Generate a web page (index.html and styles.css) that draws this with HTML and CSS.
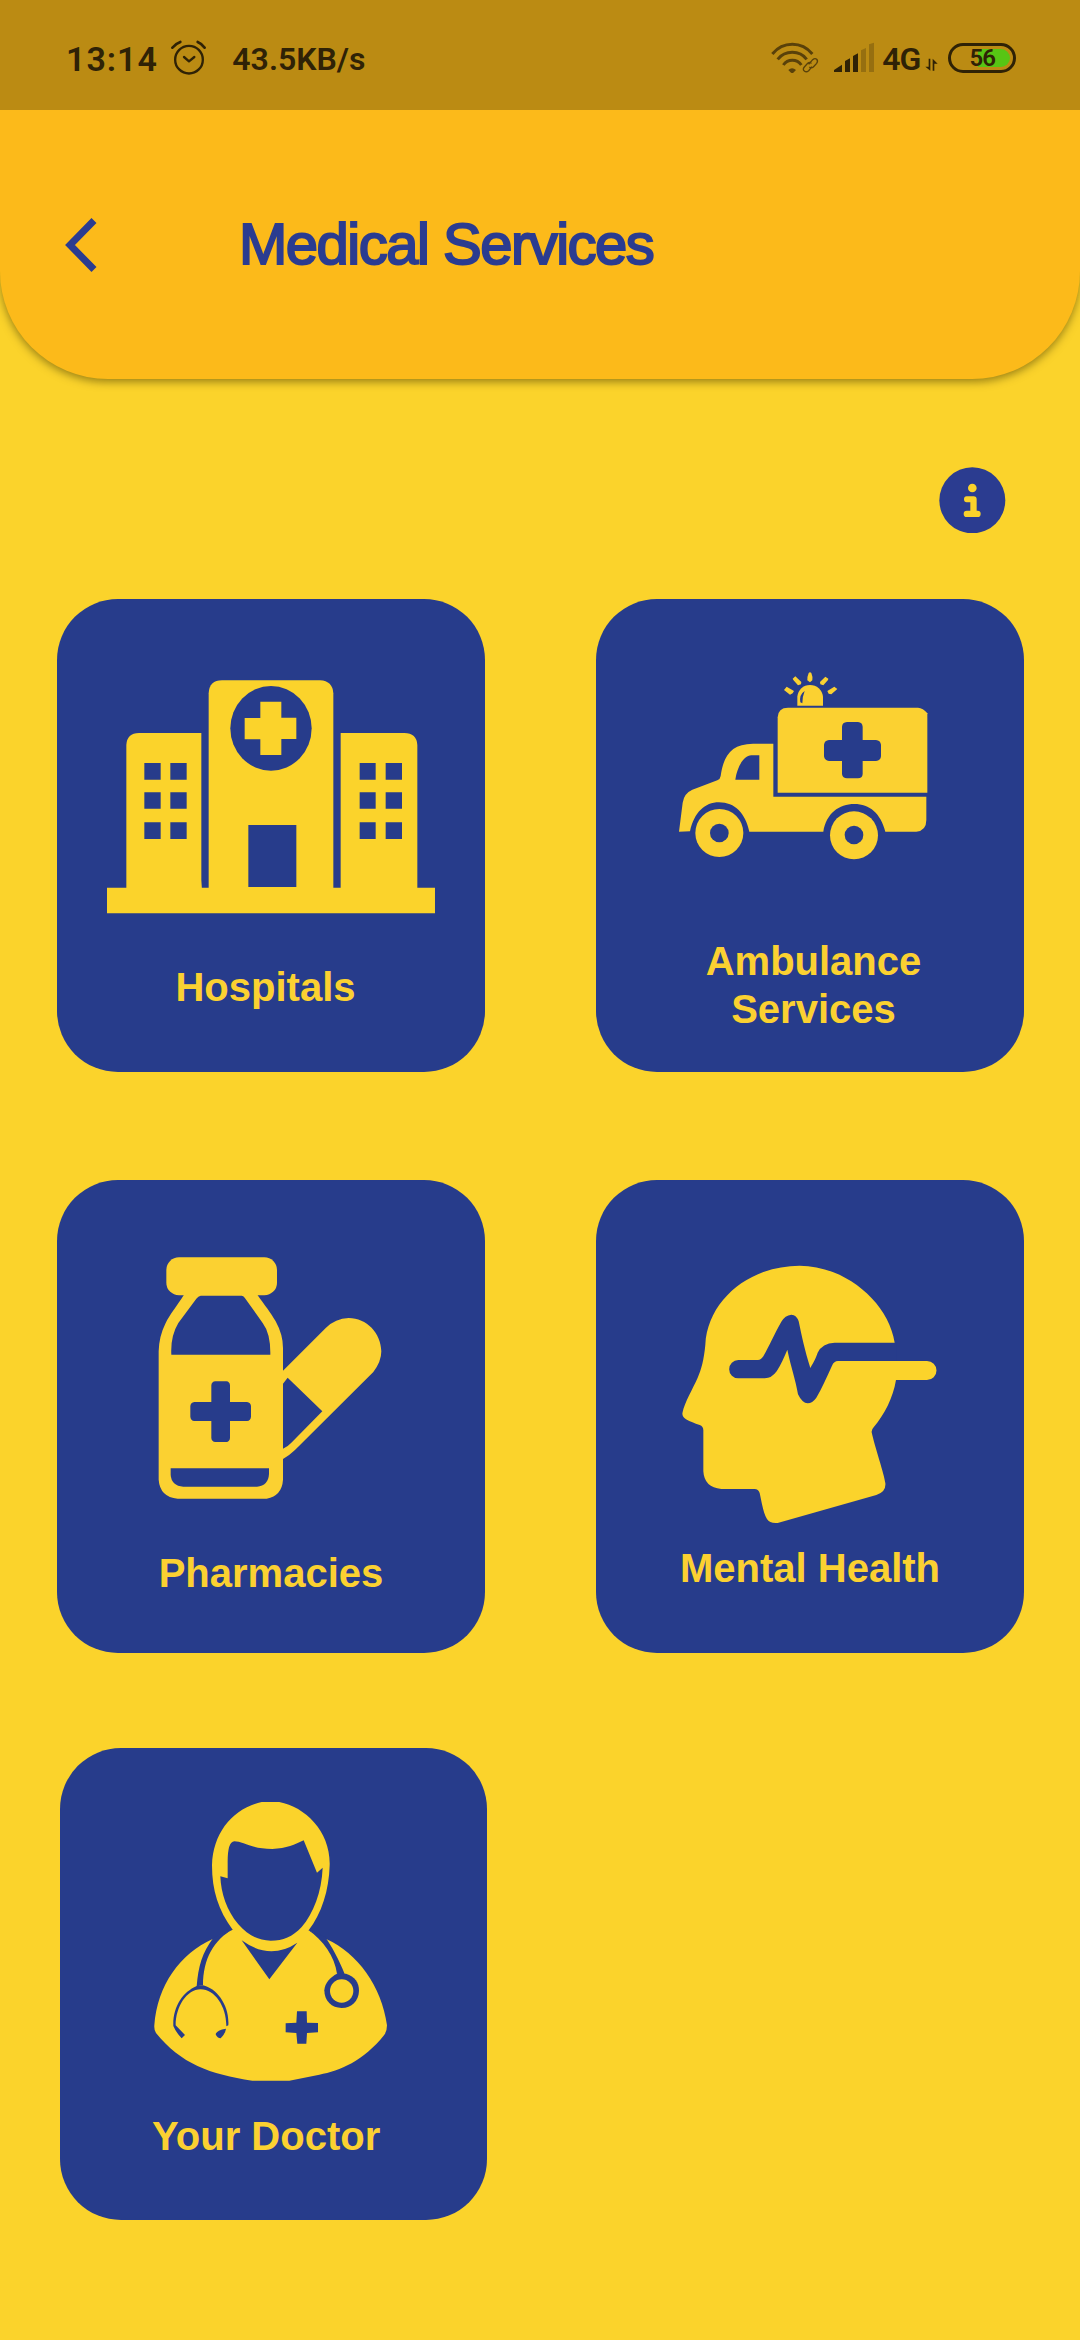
FILE: index.html
```html
<!DOCTYPE html>
<html lang="en">
<head>
<meta charset="utf-8">
<title>Medical Services</title>
<link rel="stylesheet" href="styles.css">
</head>
<body>
<header class="header">
  <div class="status">
    <span class="clock">13:14</span>
    <svg class="alarm" viewBox="345 28 112 112" fill="none" stroke="#2f2206" stroke-linecap="round">
      <circle cx="402" cy="90" r="41.500" stroke-width="7"/>
      <path d="M387 82l15 13 16-13" stroke-width="7" stroke-linejoin="round"/>
      <path d="M352 54q8-11 24-17M428 37q14 6 21 17" stroke-width="8"/>
    </svg>
    <span class="speed">43.5KB/s</span>
    <svg class="signals" viewBox="30 33 318 102">
      <g fill="none" stroke="#59410a">
        <path d="M37 72Q61 43 97 43t60 29" stroke-width="9"/>
        <path d="M53 88Q70 67 97 67t43 21" stroke-width="9"/>
        <path d="M70 105Q80 91 97 91t27 14" stroke-width="9"/>
        <path d="M146 103l12-14q7-6 12-1t0 12l-10 11q-6 5-12 0M156 110l-10 12q-7 6-13 1t0-12l10-11q6-5 12 0" stroke-width="4"/>
      </g>
      <path d="M85 120q11-11 23 0l-8 8q-3 2-7 0z" fill="#59410a"/>
      <path d="M222 126v-6l24-16v22zM255 126V93l15-8v41zM279 126V78l15-8v56z" fill="#2f2206"/>
      <path d="M303 126V61l15-7v72zM327 126V43l15-5v88z" fill="#966f10"/>
    </svg>
    <span class="network">4G</span>
    <svg class="data" viewBox="496 85 40 42" fill="#2f2206"><path d="M507 87h5v36L497 111h10zM519 123h5v-21h10L519 87z"/></svg>
    <span class="battery"><span class="level">56</span></span>
  </div>
  <div class="titlebar">
    <svg class="back" viewBox="0 0 32 54" fill="none" stroke="#2b3c90" stroke-width="7"><path d="M29 2.500L5 27l24 24.500"/></svg>
    <h1>Medical Services</h1>
  </div>
</header>

<main>
  <svg class="info" viewBox="0 0 200 200">
    <circle cx="100" cy="100" r="99" fill="#2b3c90"/>
    <g fill="#fbd32b"><circle cx="100" cy="63" r="13"/><path d="M83 88h21q9 0 9 9v34h3q9 0 9 9 0 10-9 10H83q-9 0-9-10 0-9 9-9h11v-25H83q-8 0-8-9t8-9z"/></g>
  </svg>

  <div class="grid">
    <section class="card hospitals">
      <svg class="art h-hosp" viewBox="53 57 1282 1092">
        <g fill="#fbd32b">
          <path d="M203 923H1187V1000H203z"/>
          <path d="M261 930V495Q263 459 299 459H486V900L488 930zM904 930V459H1095Q1132 459 1134 495V930z"/>
          <path d="M508 930V340Q510 301 548 301H842Q880 303 882 340V930z"/>
        </g>
        <g fill="#273c8b">
          <ellipse cx="695" cy="445" rx="122" ry="127"/>
          <path d="M627 735H771V921H627z"/>
          <path d="M315 549h49v50h-49zM393 549h49v50h-49zM315 637h49v49h-49zM393 637h49v49h-49zM315 727h49v50h-49zM393 727h49v50h-49z"/>
          <path d="M961 549h48v50h-48zM1039 549h49v50h-49zM961 637h48v49h-48zM1039 637h49v49h-49zM961 727h48v50h-48zM1039 727h49v50h-49z"/>
        </g>
        <path d="M663 365h63v48h45v64h-45v48h-63v-47h-47v-64h47z" fill="#fbd32b"/>
      </svg>
      <h2>Hospitals</h2>
    </section>

    <section class="card ambulance">
      <svg class="art h-amb" viewBox="49 57 1282 1014">
        <g fill="#fbd131">
          <path d="M298 755L309 668Q313 640 338 629L413 601Q422 597 423 588C432 525 455 492 520 491H581V650H1040V720Q1040 752 1010 755H917C903 700 870 672 824 672S740 700 731 755H509C497 700 466 667 418 667C375 667 344 697 331 754z"/>
          <path d="M594 638V412Q595 383 625 383H1015Q1030 384 1043 400V638z"/>
          <path d="M653 377V350C655 329 671 315 691 315S728 329 730 350V377z"/>
          <path d="M687 279Q691 275 695 279Q700 291 698 301L691 307 683 301Q682 291 687 279z"/>
          <path d="M639 296l8-7 18 17-1 7-9 3-14-16zM746 296l-9-6-16 16 1 7 9 3 14-16zM613 330l8-10 22 13-4 7-8 4zM773 327l-9-7-21 13 4 8 8 2z"/>
          <circle cx="419" cy="759" r="72"/><circle cx="823" cy="766" r="72"/>
        </g>
        <g fill="#273c8b">
          <circle cx="419" cy="759" r="28"/><circle cx="823" cy="765" r="28"/>
          <path d="M467 599C472 563 491 526 515 526H539V599z"/>
          <path d="M675 333Q668 350 668 370L662 367Q658 344 675 333z"/>
          <path d="M787 440Q788 427 802 426H835Q848 427 849 440V480H889Q902 481 904 494V529Q903 542 889 543H849V582Q848 595 835 595H802Q789 595 787 582V543H748Q735 542 733 529V494Q735 481 748 480H787z"/>
        </g>
      </svg>
      <h2>Ambulance<br>Services</h2>
    </section>

    <section class="card pharmacies">
      <svg class="art h-pharm" viewBox="51 61 1282 1107">
        <g fill="#fbd131">
          <rect x="379" y="293" width="332" height="114" rx="38"/>
          <path d="M432 405C410 440 390 462 376 492Q357 530 356 575V960Q360 1012 413 1017H680Q726 1008 729 960V898Q747 888 765 871L1000 637Q1024 606 1024 575C1023 520 980 475 926 475Q886 477 858 504L729 633V565Q729 525 707 485C692 458 675 438 652 405z"/>
        </g>
        <g fill="#273c8b">
          <path d="M482 408H605Q610 408 614 414L668 490Q692 522 691 585H394Q391 530 415 490L469 417Q475 409 482 408z"/>
          <path d="M392 926H687V943Q685 978 651 981H430Q394 978 392 945z"/>
          <path d="M514 677Q515 666 526 665H559Q569 666 570 677V727H621Q632 728 633 739V771Q632 783 621 784H570V835Q569 846 559 847H526Q515 846 514 835V784H463Q452 783 451 771V739Q452 728 463 727H514z"/>
          <path d="M729 672L743 654 847 755 754 849Q742 862 729 867z"/>
        </g>
      </svg>
      <h2>Pharmacies</h2>
    </section>

    <section class="card mental">
      <svg class="art h-mental" viewBox="49 61 1282 1092">
        <path d="M945 549C926 426 795 318 660 318C512 318 384 420 377 555C373 598 365 630 354 654C340 686 314 730 309 757Q305 770 319 779C332 786 344 791 360 796Q371 800 371 812V935Q374 984 425 988H525Q536 988 540 1000C547 1032 551 1060 562 1078Q570 1092 594 1090L890 1006Q920 997 917 970C914 945 885 860 876 818Q875 810 882 803C915 763 940 715 949 661H1042A28.500 28.500 0 0 0 1042 604H945z" fill="#fbd32b"/>
        <path d="M476 601H535Q544 601 551 590C570 556 583 525 605 486Q616 467 635 465Q651 466 657 485C667 533 675 570 692 625C704 604 709 594 714 579Q728 550 765 549H950V604H775Q763 604 757 618C740 655 726 687 710 714Q698 731 684 731Q668 731 655 704C648 660 633 620 623 570C613 594 604 615 591 635Q576 656 555 656H476A27.500 27.500 0 0 1 476 601z" fill="#273c8b"/>
      </svg>
      <h2>Mental Health</h2>
    </section>

    <section class="card doctor">
      <svg class="art h-doc" viewBox="60 53 1282 1092">
        <path d="M665 215H718C797 230 872 305 869 405C867 480 845 550 806 600L860 627C952 668 1025 768 1041 885Q1041 903 1032 915C970 992 900 1022 838 1033L748 1051H637C510 1032 422 1000 348 908Q342 900 343 885C352 765 420 670 518 626L578 598C535 540 516 480 516 405C519 305 580 235 665 215z" fill="#fbd32b"/>
        <g fill="#273c8b">
          <path d="M541 438L563 444V400Q562 334 583 333C608 333 635 356 697 356C740 355 765 342 791 330L831 427 848 412C845 485 820 550 785 590C757 620 730 631 692 631C652 630 622 613 595 582C560 540 543 490 541 438z"/>
          <path d="M605 630Q690 692 772 637L688 747z"/>
          <path d="M580 596C522 628 489 685 489 765L470 768C475 708 486 668 520 622z"/>
          <path d="M804 598C850 630 884 678 891 730L918 740C905 708 888 668 856 620z"/>
          <path d="M470 767C428 785 398 830 400 887Q408 906 425 924L435 914 407 885C407 830 440 777 482 777C525 777 560 830 559 888L565 885C569 825 530 774 489 765z"/>
          <path d="M558 895Q530 899 527 912Q532 924 542 924Q555 912 558 895z"/>
          <path d="M891 730H918C945 740 957 755 957 781C956 812 935 833 905 833S853 812 853 780C854 757 872 740 891 730z"/>
          <path d="M771 843H800L801 877 834 878V906L801 908 799 940H772L769 908 737 906V879L769 877z"/>
        </g>
        <circle cx="905" cy="782" r="35" fill="#fbd32b"/>
      </svg>
      <h2>Your Doctor</h2>
    </section>
  </div>
</main>
</body>
</html>
```
FILE: styles.css
```css
* {
  box-sizing: border-box;
}

body {
  margin: 0;
  width: 1080px;
  min-height: 2340px;
  background: #fbd32b;
  font-family: "Liberation Sans", Arial, sans-serif;
}

svg {
  display: block;
  flex: none;
}

h1,
h2 {
  margin: 0;
}

.header {
  height: 379px;
  background: #fcba1a;
  border-radius: 0 0 108px 108px;
  box-shadow: 0 3px 8px rgba(60, 50, 0, 0.5);
  overflow: hidden;
}

.status {
  display: flex;
  align-items: flex-start;
  height: 110px;
  padding-left: 66px;
  background: #bb8b13;
  color: #2f2206;
  font-family: Roboto, sans-serif;
  font-weight: 600;
  line-height: 40px;
  white-space: nowrap;
}

.clock {
  width: 104px;
  padding-top: 39px;
  font-size: 34px;
  letter-spacing: 1px;
}

.alarm {
  width: 37.33px;
  height: 37.33px;
  margin-top: 39.33px;
}

.speed {
  width: 563px;
  padding: 39px 0 0 25px;
  font-size: 32px;
}

.signals {
  width: 106px;
  height: 34px;
  margin-top: 41px;
}

.network {
  width: 49px;
  padding: 39px 0 0 6px;
  font-size: 32px;
  letter-spacing: -1px;
}

.data {
  width: 13.33px;
  height: 14px;
  margin-top: 58.33px;
}

.battery {
  width: 68px;
  height: 30px;
  margin: 43px 0 0 9.5px;
  padding: 3px;
  border: 3px solid #2f2206;
  border-radius: 15px;
}

.level {
  display: block;
  height: 18px;
  border-radius: 9px;
  background: linear-gradient(90deg, transparent 43%, #57c514 43%);
  font-size: 24px;
  font-weight: 600;
  line-height: 18px;
  letter-spacing: -1px;
  text-align: center;
}

.titlebar {
  display: flex;
  align-items: flex-start;
  padding: 108px 0 0 65px;
}

.back {
  width: 32px;
  height: 54px;
}

h1 {
  margin: -6px 0 0 142px;
  color: #2b3c90;
  font-size: 58px;
  font-weight: 400;
  line-height: 64px;
  letter-spacing: -1.5px;
  -webkit-text-stroke: 2px #2b3c90;
}

.info {
  width: 66.67px;
  height: 66.67px;
  margin: 87.67px 0 0 939.33px;
}

.grid {
  display: grid;
  grid-template-columns: 427.33px 427.33px;
  grid-template-rows: 581.33px 567.33px 472.67px;
  column-gap: 111.67px;
  padding: 65.67px 0 0 57.33px;
}

.card {
  display: flex;
  flex-direction: column;
  width: 427.33px;
  height: 472.67px;
  border-radius: 61px;
  background: #273c8b;
}

.doctor {
  margin-left: 2.67px;
}

.art {
  width: 427.33px;
}

.h-hosp,
.h-mental,
.h-doc {
  height: 364px;
}

.h-amb {
  height: 338px;
}

.h-pharm {
  height: 369px;
}

h2 {
  color: #fbd131;
  font-size: 40px;
  font-weight: 700;
  line-height: 48px;
  text-align: center;
}

.hospitals h2 {
  padding-right: 11px;
}

.ambulance h2 {
  padding-left: 7px;
}

.doctor h2 {
  padding-right: 15px;
}
```
